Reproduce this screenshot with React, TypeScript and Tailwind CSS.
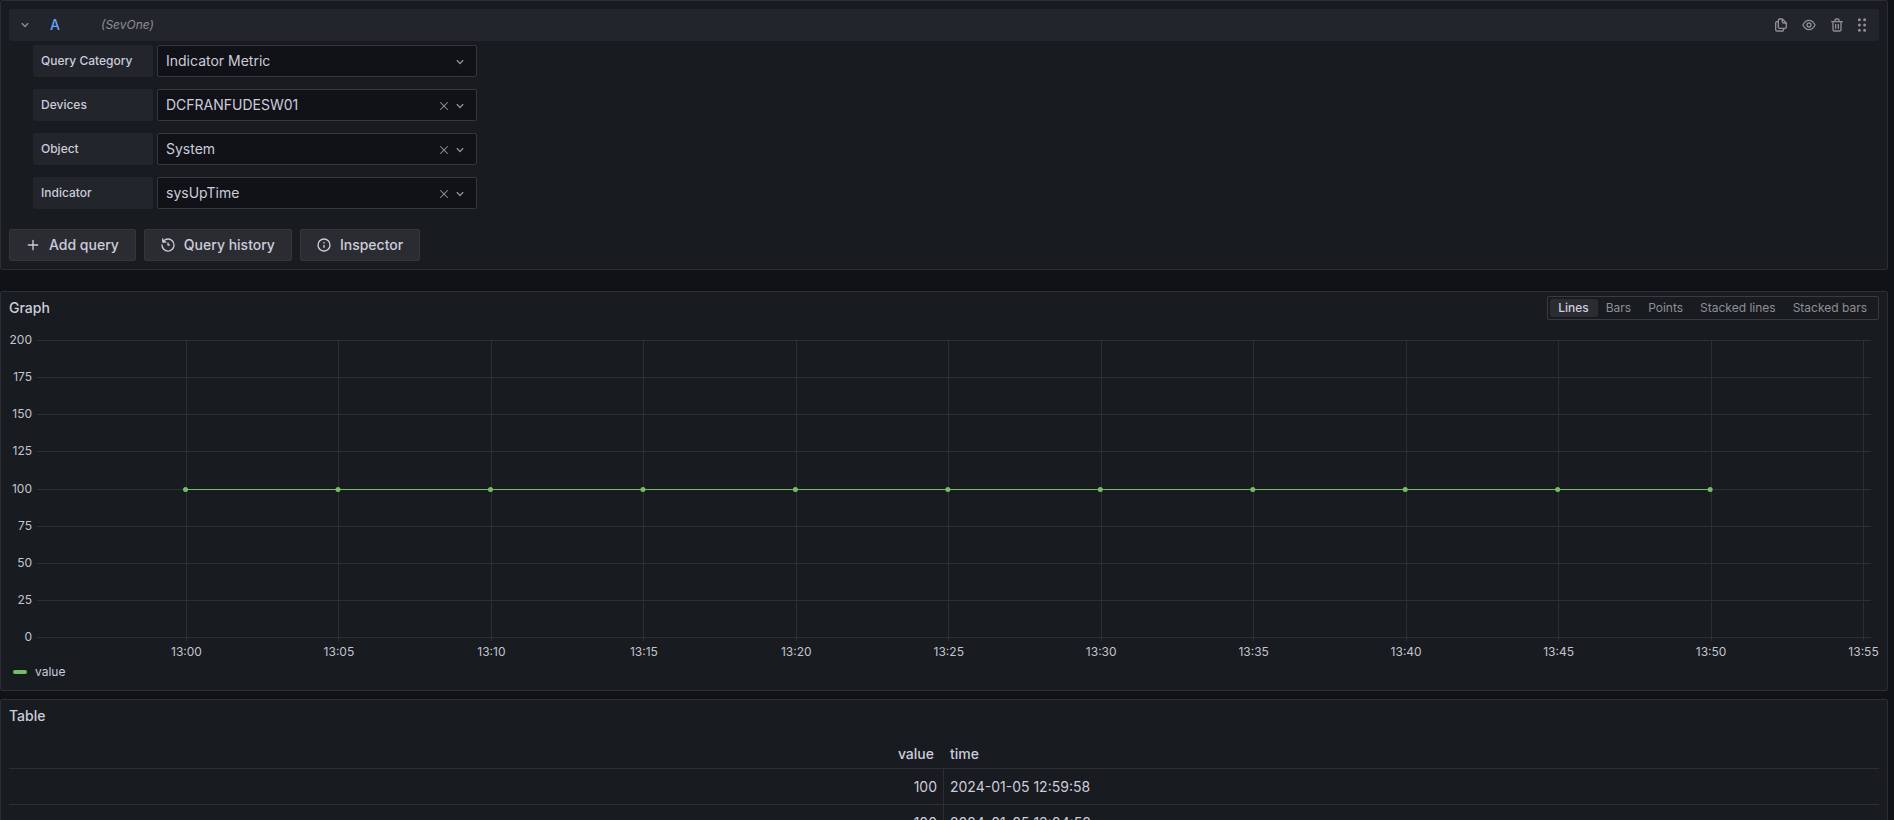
import { useState } from 'react';
import type { ReactNode } from 'react';

const STYLES = ['Lines', 'Bars', 'Points', 'Stacked lines', 'Stacked bars'];

const TICKS = ['13:00', '13:05', '13:10', '13:15', '13:20', '13:25', '13:30', '13:35', '13:40', '13:45', '13:50', '13:55'];
const LEVELS = [200, 175, 150, 125, 100, 75, 50, 25, 0];

const ROWS = [
  { value: 100, time: '2024-01-05 12:59:58' },
  { value: 100, time: '2024-01-05 13:04:58' },
];

const FIELDS = [
  { id: 'category', label: 'Query Category', value: 'Indicator Metric', clearable: false },
  { id: 'devices', label: 'Devices', value: 'DCFRANFUDESW01', clearable: true },
  { id: 'object', label: 'Object', value: 'System', clearable: true },
  { id: 'indicator', label: 'Indicator', value: 'sysUpTime', clearable: true },
];

const PATHS = {
  angle: 'M17,9.17a1,1,0,0,0-1.41,0L12,12.71,8.46,9.17a1,1,0,0,0-1.41,0,1,1,0,0,0,0,1.42l4.24,4.24a1,1,0,0,0,1.42,0L17,10.59A1,1,0,0,0,17,9.17Z',
  times: 'M13.41,12l6.3-6.29a1,1,0,1,0-1.42-1.42L12,10.59,5.71,4.29A1,1,0,0,0,4.29,5.71L10.59,12l-6.3,6.29a1,1,0,0,0,0,1.42,1,1,0,0,0,1.42,0L12,13.41l6.29,6.3a1,1,0,0,0,1.42,0,1,1,0,0,0,0-1.42Z',
  plus: 'M19,11H13V5a1,1,0,0,0-2,0v6H5a1,1,0,0,0,0,2h6v6a1,1,0,0,0,2,0V13h6a1,1,0,0,0,0-2Z',
  history: 'M12,2A10,10,0,0,0,5.12,4.77V3a1,1,0,0,0-2,0V7.5a1,1,0,0,0,1,1H8.62a1,1,0,0,0,0-2H6.22A8,8,0,1,1,4,12a1,1,0,0,0-2,0A10,10,0,1,0,12,2Zm0,6a1,1,0,0,0-1,1v3a1,1,0,0,0,1,1h2a1,1,0,0,0,0-2H13V9A1,1,0,0,0,12,8Z',
  info: 'M12,2A10,10,0,1,0,22,12,10.01114,10.01114,0,0,0,12,2Zm0,18a8,8,0,1,1,8-8A8.00917,8.00917,0,0,1,12,20Zm0-8.5a1,1,0,0,0-1,1v3a1,1,0,0,0,2,0v-3A1,1,0,0,0,12,11.5Zm0-4a1.25,1.25,0,1,0,1.25,1.25A1.25,1.25,0,0,0,12,7.5Z',
  copy: 'M21,8.94a1.31,1.31,0,0,0-.06-.27l0-.09a1.07,1.07,0,0,0-.19-.28h0l-6-6h0a1.07,1.07,0,0,0-.28-.19.32.32,0,0,0-.09,0A.88.88,0,0,0,14.05,2H10A3,3,0,0,0,7,5V6H6A3,3,0,0,0,3,9V19a3,3,0,0,0,3,3h8a3,3,0,0,0,3-3V18h1a3,3,0,0,0,3-3V9S21,9,21,8.94ZM15,5.41,17.59,8H16a1,1,0,0,1-1-1ZM15,19a1,1,0,0,1-1,1H6a1,1,0,0,1-1-1V9A1,1,0,0,1,6,8H7v7a3,3,0,0,0,3,3h5Zm4-4a1,1,0,0,1-1,1H10a1,1,0,0,1-1-1V5a1,1,0,0,1,1-1h3V7a3,3,0,0,0,3,3h3Z',
  eye: 'M21.92,11.6C19.9,6.91,16.1,4,12,4S4.1,6.91,2.08,11.6a1,1,0,0,0,0,.8C4.1,17.09,7.9,20,12,20s7.9-2.91,9.92-7.6A1,1,0,0,0,21.92,11.6ZM12,18c-3.17,0-6.17-2.29-7.9-6C5.83,8.29,8.83,6,12,6s6.17,2.29,7.9,6C18.17,15.71,15.17,18,12,18ZM12,8a4,4,0,1,0,4,4A4,4,0,0,0,12,8Zm0,6a2,2,0,1,1,2-2A2,2,0,0,1,12,14Z',
  trash: 'M10,18a1,1,0,0,0,1-1V11a1,1,0,0,0-2,0v6A1,1,0,0,0,10,18ZM20,6H16V5a3,3,0,0,0-3-3H11A3,3,0,0,0,8,5V6H4A1,1,0,0,0,4,8H5V19a3,3,0,0,0,3,3h8a3,3,0,0,0,3-3V8h1a1,1,0,0,0,0-2ZM10,5a1,1,0,0,1,1-1h2a1,1,0,0,1,1,1V6H10Zm7,14a1,1,0,0,1-1,1H8a1,1,0,0,1-1-1V8H17Zm-3-1a1,1,0,0,0,1-1V11a1,1,0,0,0-2,0v6A1,1,0,0,0,14,18Z',
  drag: 'M8.5,10a2,2,0,1,0,2,2A2,2,0,0,0,8.5,10Zm0,7a2,2,0,1,0,2,2A2,2,0,0,0,8.5,17Zm7-10a2,2,0,1,0-2-2A2,2,0,0,0,15.5,7Zm-7-4a2,2,0,1,0,2,2A2,2,0,0,0,8.5,3Zm7,14a2,2,0,1,0,2,2A2,2,0,0,0,15.5,17Zm0-7a2,2,0,1,0,2,2A2,2,0,0,0,15.5,10Z',
};

function Icon({ name, className = 'w-4 h-4' }: { name: keyof typeof PATHS; className?: string }) {
  return (
    <svg viewBox="0 0 24 24" fill="currentColor" aria-hidden="true" className={`block shrink-0 ${className}`}>
      <path d={PATHS[name]} />
    </svg>
  );
}

function Panel({ className, children }: { className: string; children: ReactNode }) {
  return <section className={`border border-[#2d2e34] rounded-xs bg-[#181b1f] px-2 ${className}`}>{children}</section>;
}

function QueryField({ id, label, value, clearable }: (typeof FIELDS)[number]) {
  const [current, setCurrent] = useState(value);

  return (
    <div className="flex gap-1">
      <label htmlFor={id} className="flex items-center w-30 h-8 px-2 rounded-xs bg-[#22252b] text-xs font-medium">
        {label}
      </label>
      <div className="relative w-80">
        <select
          id={id}
          value={current}
          onChange={(e) => setCurrent(e.target.value)}
          className="w-full h-8 pl-2 pr-12 appearance-none rounded-xs border border-[#36373d] bg-[#111217] text-sm"
        >
          <option value="" />
          <option value={value}>{value}</option>
        </select>
        <div className="absolute right-[9px] inset-y-0 flex items-center gap-0.5 pt-0.5 text-[#8e8f97] pointer-events-none">
          {clearable && (
            <button aria-label={`Clear ${label}`} onClick={() => setCurrent('')} className="pointer-events-auto">
              <Icon name="times" className="w-3 h-3" />
            </button>
          )}
          <Icon name="angle" />
        </div>
      </div>
    </div>
  );
}

function ActionButton({ icon, children }: { icon: keyof typeof PATHS; children: ReactNode }) {
  return (
    <button className="flex items-center gap-2 h-8 pl-[15px] pr-4 rounded-xs border border-[#34363b] bg-[#2a2c31] text-sm font-medium">
      <Icon name={icon} />
      {children}
    </button>
  );
}

// x positions are a share of the plot's width, so the grid stretches with the panel
const tickX = (i: number) => `${8.15 + i * 8.313}%`;
const pointX = (i: number) => `${8.1 + i * 8.313}%`;
const levelY = (level: number) => Math.round(297 - (level * 297) / 200) + 8;

function Chart() {
  return (
    <div className="mt-3 pl-7 pr-2">
      <svg className="block w-full h-[328px] overflow-visible text-xs" role="img" aria-label="value over time">
        <g stroke="#2c2f33" shapeRendering="crispEdges">
          {LEVELS.map((level) => (
            <line key={level} x1="0" x2="100%" y1={levelY(level)} y2={levelY(level)} />
          ))}
          {TICKS.map((tick, i) => (
            <line key={tick} x1={tickX(i)} x2={tickX(i)} y1="8" y2="309" />
          ))}
        </g>
        <g fill="#c3c4ce">
          {LEVELS.map((level) => (
            <text key={level} x="-5" y={levelY(level) + 4} textAnchor="end">{level}</text>
          ))}
          {TICKS.map((tick, i) => (
            <text key={tick} x={tickX(i)} y="324" textAnchor="middle">{tick}</text>
          ))}
        </g>
        <line x1={pointX(0)} x2={pointX(10)} y1={levelY(100)} y2={levelY(100)} stroke="#73bf69" shapeRendering="crispEdges" />
        {TICKS.slice(0, 11).map((tick, i) => (
          <circle key={tick} cx={pointX(i)} cy={levelY(100) + 0.5} r="2.5" fill="#73bf69" />
        ))}
      </svg>
    </div>
  );
}

export default function App() {
  const [style, setStyle] = useState('Lines');

  return (
    <main className="h-screen overflow-hidden bg-[#111217] pr-1.5 font-[Inter,sans-serif] text-[#ccccdc]">
      <Panel className="py-2">
        <header className="flex items-center h-8 px-2 rounded-xs bg-[#22252b]">
          <button aria-label="Collapse query" className="text-[#8e8f97]">
            <Icon name="angle" />
          </button>
          <span className="w-11 ml-4 pl-px text-sm font-medium text-[#6e9fff]">A</span>
          <em className="ml-2 text-xs text-[#8e8f97]">(SevOne)</em>
          <div className="flex gap-2 ml-auto text-[#8e8f97]">
            <div className="flex gap-3">
              <button aria-label="Duplicate query"><Icon name="copy" /></button>
              <button aria-label="Hide response"><Icon name="eye" /></button>
              <button aria-label="Remove query"><Icon name="trash" /></button>
            </div>
            <button aria-label="Drag to reorder"><Icon name="drag" className="w-[18px] h-[18px]" /></button>
          </div>
        </header>

        <div className="flex flex-col gap-3 pt-1 pl-6">
          {FIELDS.map((field) => (
            <QueryField key={field.id} {...field} />
          ))}
        </div>

        <div className="flex gap-2 mt-5">
          <ActionButton icon="plus">Add query</ActionButton>
          <ActionButton icon="history">Query history</ActionButton>
          <ActionButton icon="info">Inspector</ActionButton>
        </div>
      </Panel>

      <div className="mt-[21px]">
        <Panel className="pt-1 pb-1.5">
          <div className="flex items-center justify-between h-6">
            <h2 className="text-sm font-medium">Graph</h2>
            <div className="flex h-6 p-0.5 rounded-xs border border-[#3a3b41] text-xs">
              {STYLES.map((name) => (
                <button
                  key={name}
                  aria-pressed={style === name}
                  onClick={() => setStyle(name)}
                  className={`pl-2 pr-[9px] rounded-xs ${style === name ? 'bg-[#2a2c31] font-medium' : 'text-[#8e8f97]'}`}
                >
                  {name}
                </button>
              ))}
            </div>
          </div>
          <Chart />
          <div className="flex items-center gap-2 h-6 px-1 text-xs">
            <span className="w-3.5 h-1 rounded-full bg-[#73bf69]" />
            value
          </div>
        </Panel>
      </div>

      <div className="mt-2">
        <Panel className="pt-1 pb-2">
          <h2 className="text-sm leading-6 font-medium">Table</h2>
          <table className="w-full mt-3 table-fixed border-separate border-spacing-0 text-sm">
            <thead>
              <tr className="h-[29px]">
                <th className="pr-2.5 font-medium text-right border-b border-[#2d2e34]">value</th>
                <th className="pl-1.5 font-medium text-left border-b border-[#2d2e34]">time</th>
              </tr>
            </thead>
            <tbody>
              {ROWS.map((row) => (
                <tr key={row.time} className="h-9">
                  <td className="pr-1.5 text-right border-r border-b border-[#2d2e34]">{row.value}</td>
                  <td className="pl-1.5 border-b border-[#2d2e34]">{row.time}</td>
                </tr>
              ))}
            </tbody>
          </table>
        </Panel>
      </div>
    </main>
  );
}
